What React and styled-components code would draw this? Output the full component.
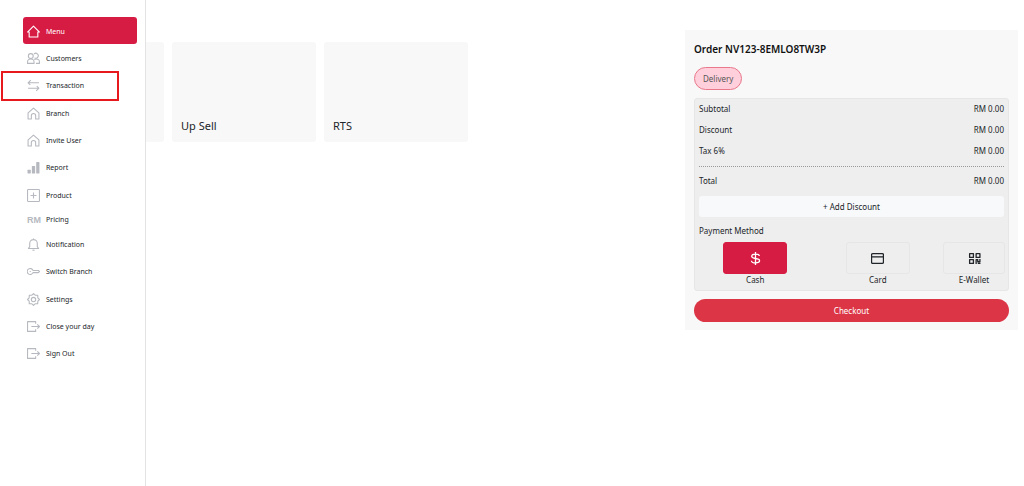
import React, { useState } from 'react';
import styled, { createGlobalStyle } from 'styled-components';

const GlobalStyle = createGlobalStyle`
    * {
        box-sizing: border-box;
    }

    body {
        margin: 0;
        background: #fff;
        color: #212529;
        font-family: "Noto Sans", "Open Sans", sans-serif;
        font-size: 8px;
        line-height: 12px;
    }

    button {
        font: inherit;
        color: inherit;
        cursor: pointer;
    }
`

const HouseIcon = () => (
    <Icon viewBox="0 0 24 24">
        <path d="M1 13 12 2l11 11h-3v9H4v-9H1Z" />
    </Icon>
)

const UsersIcon = () => (
    <Icon viewBox="0 0 24 24">
        <circle cx="7" cy="7.500" r="4.500" />
        <path d="M13 3.800a4.500 4.500 0 1 1 1 7" />
        <path d="M1 21v-2.500C1 15 3.500 13 7 13s6 2 6 5.500V21H1Z" />
        <path d="M13.500 13.800C14.500 13 15.500 13 17 13c3.500 0 6 2 6 5.500V21h-6.500" />
    </Icon>
)

const TransferIcon = () => (
    <Icon viewBox="0 0 24 24">
        <path d="M22 7H2l5-5M2 7l4 4M2 17h20l-5 5M22 17l-4-4" />
    </Icon>
)

const BranchIcon = () => (
    <Icon viewBox="0 0 24 24">
        <path d="M2 11 12 2l10 9v11h-6v-6a4 4 0 0 0-8 0v6H2V11Z" />
    </Icon>
)

const ReportIcon = () => (
    <Icon viewBox="0 0 24 24">
        <g fill="currentColor" stroke="none">
            <rect x="1" y="16" width="6" height="7" rx="1" />
            <rect x="9" y="9" width="6" height="14" rx="1" />
            <rect x="17" y="2" width="6" height="21" rx="1" />
        </g>
    </Icon>
)

const ProductIcon = () => (
    <Icon viewBox="0 0 24 24">
        <rect x="1" y="1" width="22" height="22" rx="1.500" />
        <path d="M12 6.500v11M6.500 12h11" />
    </Icon>
)

const BellIcon = () => (
    <Icon viewBox="0 0 24 24">
        <path d="M12 1v2M2.500 19.500h19L19 16v-6a7 7 0 0 0-14 0v6l-2.500 3.500Z" />
        <path d="M10 22.500h4" />
    </Icon>
)

const KeyIcon = () => (
    <Icon viewBox="0 0 24 24">
        <path d="M11 10a5.500 5.500 0 1 0 0 4h10l2-2-2-2H11Z" />
        <path d="M5 12h2" />
    </Icon>
)

const GearIcon = () => (
    <Icon viewBox="0 0 24 24">
        <path d="m12 1 3 3 4.800.200.200 4.800 3 3-3 3-.200 4.800-4.800.200-3 3-3-3-4.800-.200L4 15l-3-3 3-3 .200-4.800L9 4Z" />
        <circle cx="12" cy="12" r="4" />
    </Icon>
)

const ExitIcon = () => (
    <Icon viewBox="0 0 24 24">
        <path d="M16 7V3H1v18h15v-4M8 12h15M19 8l4 4-4 4" />
    </Icon>
)

const DollarIcon = () => (
    <PayIcon viewBox="0 0 24 24">
        <path d="M12 0v24M19 7.500C19 5 16 4 12 4S5 5.300 5 8s3 3.500 7 4 7.500 1.500 7.500 4.200S16 20 12 20s-7.500-1.300-7.500-4" />
    </PayIcon>
)

const CardIcon = () => (
    <PayIcon viewBox="0 0 24 24">
        <rect x="1" y="3" width="22" height="18" rx="2" />
        <path d="M1 9h22" />
    </PayIcon>
)

const QrIcon = () => (
    <PayIcon viewBox="0 0 24 24">
        <rect x="3" y="3" width="7" height="7" />
        <rect x="15" y="3" width="7" height="7" />
        <rect x="3" y="14" width="7" height="7" />
        <path d="M15 22v-8h3v4h4v-5M18 21h5" />
    </PayIcon>
)

const menuGroups = [
    [
        { label: 'Menu', icon: <HouseIcon /> },
        { label: 'Customers', icon: <UsersIcon /> },
        { label: 'Transaction', icon: <TransferIcon />, marked: true },
    ],
    [
        { label: 'Branch', icon: <BranchIcon /> },
        { label: 'Invite User', icon: <BranchIcon /> },
        { label: 'Report', icon: <ReportIcon /> },
    ],
    [
        { label: 'Product', icon: <ProductIcon /> },
        { label: 'Pricing', short: true },
        { label: 'Notification', icon: <BellIcon /> },
        { label: 'Switch Branch', icon: <KeyIcon /> },
    ],
    [
        { label: 'Settings', icon: <GearIcon /> },
        { label: 'Close your day', icon: <ExitIcon /> },
        { label: 'Sign Out', icon: <ExitIcon /> },
    ],
];

const amounts = [
    { label: 'Subtotal', value: 'RM 0.00' },
    { label: 'Discount', value: 'RM 0.00' },
    { label: 'Tax 6%', value: 'RM 0.00' },
];

const payments = [
    { id: 'cash', label: 'Cash', icon: <DollarIcon /> },
    { id: 'card', label: 'Card', icon: <CardIcon /> },
    { id: 'ewallet', label: 'E-Wallet', icon: <QrIcon /> },
];

const App = () => {
    const [page, setPage] = useState('Menu');
    const [payment, setPayment] = useState('cash');

    return (
        <>
            <GlobalStyle />
            <Sidebar>
                {menuGroups.map((group) => (
                    <MenuGroup key={group[0].label}>
                        {group.map((item) => (
                            <MenuItem key={item.label} $short={item.short}>
                                <MenuLink
                                    href="#"
                                    $active={page === item.label}
                                    onClick={() => setPage(item.label)}
                                >
                                    <IconSlot>{item.icon || <Currency>RM</Currency>}</IconSlot>
                                    {item.label}
                                </MenuLink>
                                {item.marked && <Marker />}
                            </MenuItem>
                        ))}
                    </MenuGroup>
                ))}
            </Sidebar>
            <Page>
                <Categories>
                    <Category />
                    <Category>Up Sell</Category>
                    <Category>RTS</Category>
                </Categories>
                <Order>
                    <OrderTitle>Order NV123-8EMLO8TW3P</OrderTitle>
                    <OrderType type="button">Delivery</OrderType>
                    <Summary>
                        <Amounts>
                            {amounts.map((row) => (
                                <AmountRow key={row.label}>
                                    <dt>{row.label}</dt>
                                    <dd>{row.value}</dd>
                                </AmountRow>
                            ))}
                            <TotalRow>
                                <dt>Total</dt>
                                <dd>RM 0.00</dd>
                            </TotalRow>
                        </Amounts>
                        <DiscountBtn type="button">+ Add Discount</DiscountBtn>
                        <PaymentTitle>Payment Method</PaymentTitle>
                        <PaymentRow>
                            {payments.map((item) => (
                                <PaymentOption key={item.id}>
                                    <PaymentBtn
                                        id={item.id}
                                        type="button"
                                        $active={payment === item.id}
                                        onClick={() => setPayment(item.id)}
                                    >
                                        {item.icon}
                                    </PaymentBtn>
                                    <label htmlFor={item.id}>{item.label}</label>
                                </PaymentOption>
                            ))}
                        </PaymentRow>
                    </Summary>
                    <CheckoutBtn type="button">Checkout</CheckoutBtn>
                </Order>
            </Page>
        </>
    )
}

const Icon = styled.svg`
    display: block;
    width: 13px;
    height: 13px;
    fill: none;
    stroke: currentColor;
    stroke-width: 2;
    stroke-linejoin: round;
`

const PayIcon = styled(Icon)`
    stroke-width: 2.4;
`

const Sidebar = styled.nav`
    position: fixed;
    z-index: 1;
    top: 0;
    bottom: 0;
    left: 0;
    display: flex;
    flex-direction: column;
    gap: 1px;
    width: 146px;
    padding-top: 17px;
    background: #fff;
    border-right: 1px solid #e2e3e5;
`

const MenuGroup = styled.ul`
    margin: 0;
    padding: 0 8px 0 23px;
    list-style: none;
`

const MenuItem = styled.li`
    position: relative;
    display: flex;
    height: ${(props) => (props.$short ? '22px' : '27px')};
`

const MenuLink = styled.a`
    flex: 1;
    display: flex;
    align-items: center;
    gap: 6px;
    padding: 2px 0 0 4px;
    border-radius: 3px;
    background: ${(props) => (props.$active ? '#d71c44' : 'transparent')};
    color: ${(props) => (props.$active ? '#fff' : '#212529')};
    font-size: 7px;
    text-decoration: none;

    svg, b {
        color: ${(props) => (props.$active ? '#fff' : '#b6b9bf')};
    }
`

const IconSlot = styled.span`
    flex: none;
    width: 13px;
`

const Currency = styled.b`
    font-family: "Liberation Sans", sans-serif;
    font-size: 9px;
`

const Marker = styled.span`
    position: absolute;
    inset: 0 18px -3px -22px;
    border: 2px solid #e8191c;
    pointer-events: none;
`

const Page = styled.main`
    display: flex;
    justify-content: space-between;
    align-items: flex-start;
    gap: 24px;
    padding: 30px 6px 0 20px;
`

const Categories = styled.section`
    display: flex;
    gap: 8px;
    padding-top: 12px;
`

const Category = styled.article`
    display: flex;
    align-items: flex-end;
    width: 144px;
    height: 100px;
    padding: 8px 9px;
    border-radius: 3px;
    background: #f8f8f8;
    font-size: 11px;
    line-height: 16px;
`

const Order = styled.aside`
    flex: 0 1 333px;
    padding: 8px 9px;
    background: #f8f8f8;
`

const OrderTitle = styled.h1`
    margin: 0 0 7px;
    color: #111;
    font-size: 10px;
    font-weight: 600;
    line-height: 22px;
`

const OrderType = styled.button`
    display: block;
    height: 23px;
    margin-bottom: 8px;
    padding: 0 8px;
    border: 1px solid #e8788a;
    border-radius: 12px;
    background: #ffd0dc;
    color: #555;
`

const Summary = styled.section`
    padding: 4px;
    border: 1px solid #e6e6e6;
    border-radius: 3px;
    background: #eee;
`

const Amounts = styled.dl`
    display: grid;
    gap: 9px;
    margin: 0 0 9px;
`

const AmountRow = styled.div`
    display: flex;
    justify-content: space-between;

    dd {
        margin: 0;
    }
`

const TotalRow = styled(AmountRow)`
    padding-top: 8px;
    border-top: 1px dotted #999;
`

const DiscountBtn = styled.button`
    display: block;
    width: 100%;
    height: 21px;
    padding: 0;
    border: 0;
    border-radius: 3px;
    background: #f8f9fb;
`

const PaymentTitle = styled.h2`
    margin: 8px 0 5px;
    font-size: 8px;
    font-weight: 400;
`

const PaymentRow = styled.div`
    display: grid;
    grid-template-columns: 7fr 7fr 4fr;
    margin: 0 -5px;
`

const PaymentOption = styled.div`
    display: flex;
    flex-direction: column;
    align-items: center;
    padding: 0 4px;
`

const PaymentBtn = styled.button`
    display: flex;
    align-items: center;
    justify-content: center;
    width: 100%;
    max-width: 64px;
    height: 32px;
    border: 1px solid ${(props) => (props.$active ? '#d71c44' : '#e6e6e6')};
    border-radius: 3px;
    background: ${(props) => (props.$active ? '#d71c44' : 'transparent')};
    color: ${(props) => (props.$active ? '#fff' : '#212529')};
`

const CheckoutBtn = styled.button`
    display: block;
    width: 100%;
    height: 23px;
    margin-top: 8px;
    border: 0;
    border-radius: 12px;
    background: #dc3545;
    color: #fff;
`

export default App
